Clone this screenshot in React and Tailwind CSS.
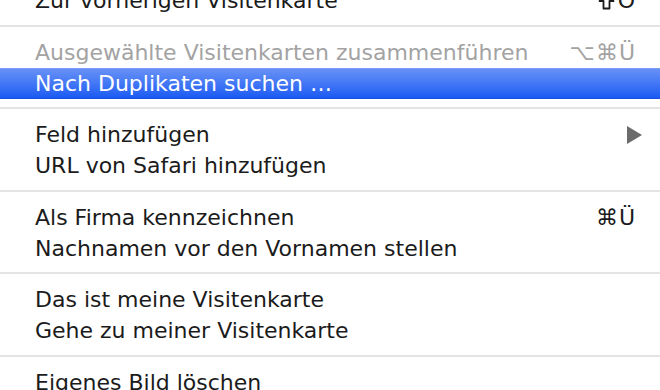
const sections = [
  [{ label: "Zur vorherigen Visitenkarte", shortcut: "O", shift: true }],
  [
    { label: "Ausgewählte Visitenkarten zusammenführen", shortcut: "⌥⌘Ü", disabled: true },
    { label: "Nach Duplikaten suchen …", active: true },
  ],
  [
    { label: "Feld hinzufügen", submenu: true },
    { label: "URL von Safari hinzufügen" },
  ],
  [
    { label: "Als Firma kennzeichnen", shortcut: "⌘Ü" },
    { label: "Nachnamen vor den Vornamen stellen" },
  ],
  [
    { label: "Das ist meine Visitenkarte" },
    { label: "Gehe zu meiner Visitenkarte" },
  ],
  [{ label: "Eigenes Bild löschen" }],
];

// shift key glyph, drawn because the font lacks it
function ShiftIcon() {
  return (
    <svg width="17" height="18" viewBox="0 0 17 18" className="mr-[3px]">
      <path
        d="M8.5 1.5 L15.5 9 L11.5 9 L11.5 16.5 L5.5 16.5 L5.5 9 L1.5 9 Z"
        fill="none"
        stroke="#1b1b1b"
        strokeWidth="1.8"
        strokeLinejoin="round"
      />
    </svg>
  );
}

function MenuItem({ item }) {
  let cls = "text-[#1b1b1b]";
  if (item.disabled) cls = "text-[#a3a3a3]";
  if (item.active)
    cls = "text-white bg-gradient-to-b from-[#6690f6] to-[#1a5af3] border-t border-[#7a9cf4] border-b border-b-[#1750dc]";

  return (
    <div className={`h-[31px] flex items-center justify-between pl-[35px] pr-[24px] ${cls}`}>
      <span className="whitespace-nowrap">{item.label}</span>
      {item.shortcut && (
        <span className="flex items-center whitespace-nowrap tracking-[1px]">
          {item.shift && <ShiftIcon />}
          {item.shortcut}
        </span>
      )}
      {item.submenu && (
        <svg width="15" height="18" viewBox="0 0 15 18" className="mr-[-6px]">
          <path d="M0 0 L15 9 L0 18 Z" fill="#6b6b6b" />
        </svg>
      )}
    </div>
  );
}

export default function App() {
  return (
    <div className="w-[660px] h-[390px] overflow-hidden bg-white font-['DejaVu_Sans',sans-serif] text-[22px]">
      <div className="-mt-[15px]">
        {sections.map((section, i) => (
          <div key={i}>
            {i > 0 && (
              <div className="pt-[8.5px] pb-[10px]">
                <div className="h-[2px] bg-[#e4e4e4]" />
              </div>
            )}
            {section.map((item, j) => (
              <MenuItem key={j} item={item} />
            ))}
          </div>
        ))}
      </div>
    </div>
  );
}
